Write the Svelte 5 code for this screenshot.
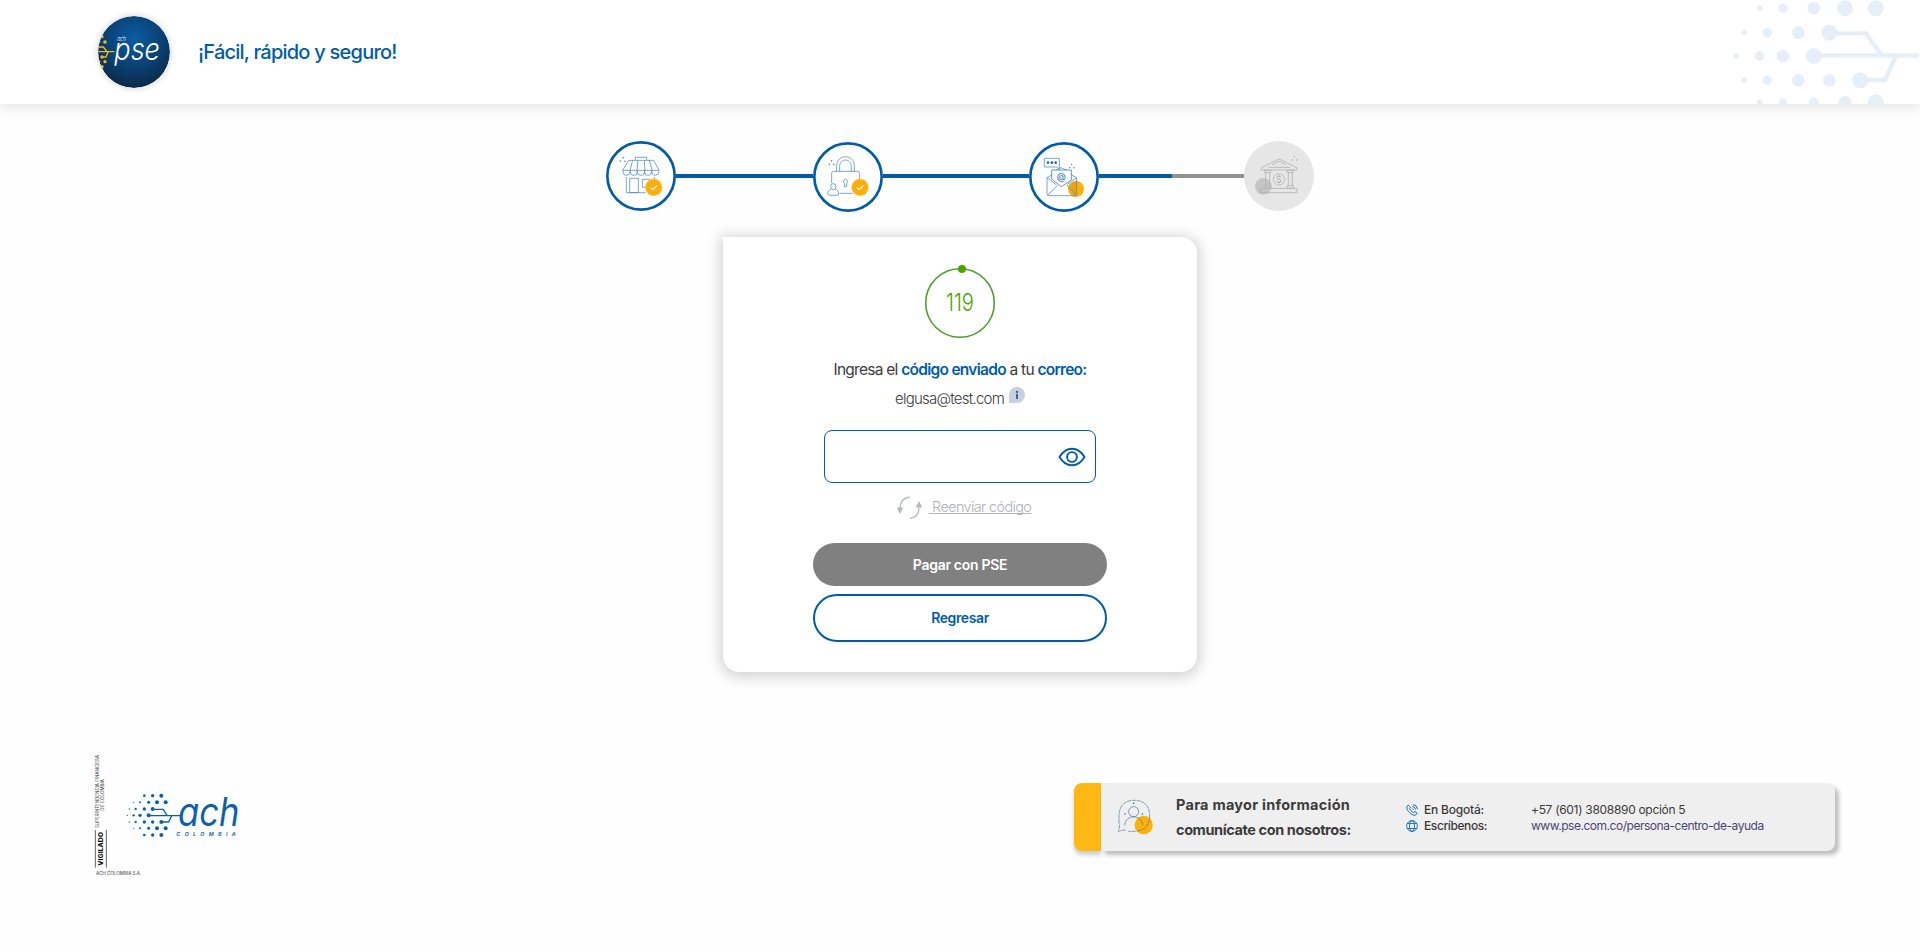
<script>
  const headerDots = [
    [179, 25, 8], [249, 25, 14], [341, 25, 19], [435, 25, 24], [527, 25, 24],
    [133, 98, 8], [202, 98, 14], [295, 98, 19], [388, 98, 24],
    [109, 168, 8], [179, 168, 14], [249, 168, 19], [341, 168, 24],
    [133, 241, 8], [202, 241, 14], [295, 241, 19], [388, 241, 19], [481, 241, 24],
    [179, 307, 8], [249, 307, 12], [341, 307, 15], [435, 307, 20], [527, 307, 24]
  ];
  const achDots = [
    [193, 167, 4], [218, 167, 5], [244, 167, 6],
    [161, 187, 2], [180, 187, 3], [206, 187, 4.5], [231, 187, 6], [257, 187, 6],
    [148, 207, 2], [167, 207, 3.5], [193, 207, 5], [218, 207, 6],
    [142, 226, 2], [161, 226, 3.5], [180, 226, 5], [206, 226, 6],
    [148, 246, 2], [167, 246, 3.5], [193, 246, 5], [218, 246, 5], [244, 246, 6],
    [161, 265, 2], [180, 265, 3], [206, 265, 4.5], [231, 265, 6], [257, 265, 6],
    [193, 285, 4], [218, 285, 5], [244, 285, 6]
  ];
  const scallops = [99, 120.5, 142, 163.5, 185];
  let code = $state('');
</script>

<header>
  <svg class="pse" viewBox="54 48 216 216" role="img" aria-label="ach pse">
    <defs>
      <radialGradient id="ball" cx=".5" cy=".32" r=".68">
        <stop offset="0" stop-color="#0b5ca4" />
        <stop offset=".55" stop-color="#0a4275" />
        <stop offset="1" stop-color="#0a2947" />
      </radialGradient>
      <clipPath id="ballclip"><circle cx="162" cy="156" r="108" /></clipPath>
    </defs>
    <circle cx="162" cy="156" r="108" fill="url(#ball)" />
    <g clip-path="url(#ballclip)" fill="#fdb515">
      <circle cx="66" cy="110" r="5" /><circle cx="75" cy="126" r="5.5" />
      <circle cx="58" cy="126" r="3.5" /><circle cx="58" cy="184" r="3.5" />
      <circle cx="75" cy="185" r="5" /><circle cx="66" cy="200" r="5" />
      <circle cx="66" cy="171" r="5" />
      <path d="M50 141h20l11 14h22M50 155h32M66 171h12l6-15" fill="none" stroke="#fdb515" stroke-width="4" />
    </g>
    <text x="112" y="124" class="tiny" textLength="26" lengthAdjust="spacingAndGlyphs">ach</text>
    <text x="103" y="180" class="big" textLength="137" lengthAdjust="spacingAndGlyphs">pse</text>
  </svg>
  <h1>¡Fácil, rápido y seguro!</h1>
  <svg class="deco" viewBox="0 0 660 312" fill="#e6eff7" aria-hidden="true">
    {#each headerDots as [x, y, r]}<circle cx={x} cy={y} r={r} />{/each}
    <path d="M388 100h110l46 66M341 167h316M481 240h74l33-72" fill="none" stroke="#e6eff7" stroke-width="13" />
  </svg>
</header>

<main>
  <div class="steps">
    <svg class="step" viewBox="48 48 210 210">
      <circle cx="153" cy="153" r="101" class="ring" />
      <g class="line">
        <path d="M116 106H191L207 136H98ZM136 106v-9h34v9M128 106l-8 30M144 106l-3 30M163 106l2 30M178 106l9 30M109 156v47h58M193 156v10M119 160h26v43h-26zM180 163h-23v24h10" />
        {#each scallops as x}<path d={`M${x} 136v4a10.5 11 0 0 0 21.5 0v-4`} />{/each}
      </g>
      <g fill="#2c70b3"><circle cx="99" cy="98" r="2.2" /><circle cx="91" cy="108" r="2.2" /><circle cx="105" cy="109" r="2.2" /></g>
      <circle cx="191" cy="187" r="25" class="check" />
      <path d="M181 187l7 7 14-13" class="tick" />
    </svg>
    <i class="bar" style="width:137px"></i>
    <svg class="step low" viewBox="669 51 210 210">
      <circle cx="774" cy="156" r="101" class="ring" />
      <g class="line">
        <path d="M740 139v-16c0-37 53-37 53 0v16M749 139v-15c0-25 35-25 35 0v15M725 174v-29q0-6 6-6h72q6 0 6 6v24M749 205h39" />
        <path d="M763 175a6.500 6.500 0 1 1 7 0v10h-7z" />
        <ellipse cx="730" cy="185" rx="8" ry="9" />
        <path d="M723 192c-6 2-10 8-10 15q1 4 7 4h21q5 0 5-4c0-8-4-13-10-15" />
      </g>
      <g fill="#2c70b3"><circle cx="725" cy="107" r="2.200" /><circle cx="718" cy="118" r="2.200" /><circle cx="731" cy="118" r="2.200" /></g>
      <circle cx="810" cy="187" r="25" class="check" />
      <path d="M800 187l7 7 14-13" class="tick" />
    </svg>
    <i class="bar" style="width:146px"></i>
    <svg class="step low" viewBox="57 51 210 210">
      <circle cx="162" cy="156" r="101" class="ring" />
      <circle cx="198" cy="192" r="24" fill="#ffb10a" />
      <path d="M176 183l24-20v47h-4q-9-16-20-27z" fill="#c08f2b" opacity=".4" />
      <g class="line">
        <path d="M103 100h45v25l1 7-9-6h-37zM137 135l16-7 16 7M125 150l-14 8v50q0 4 5 4h78q6 0 6-5v-49l-15-8M111 158l29 22M200 158l-28 20M113 210l29-28M197 210l-27-30" />
        <path d="M125 155v-20h59v30l-30 20-29-23z" stroke="#2a6db2" />
      </g>
      <text x="154" y="165" text-anchor="middle" class="at">@</text>
      <g fill="#2468ae"><circle cx="114" cy="113" r="4" /><circle cx="125.500" cy="113" r="4" /><circle cx="137" cy="113" r="4" /></g>
      <g fill="#2c70b3"><circle cx="185" cy="118" r="2" /><circle cx="179" cy="128" r="2" /><circle cx="192" cy="128" r="2" /></g>
    </svg>
    <i class="bar" style="width:73px"></i><i class="bar off" style="width:72px"></i>
    <svg class="step" viewBox="702 48 210 210">
      <circle cx="807" cy="153" r="105" fill="#e6e6e6" />
      <circle cx="760" cy="184" r="25" fill="#c5c5c5" />
      <g class="line grey">
        <path d="M754 135v-7l53-26 53 26v7zM786 119l21-10 21 10M775 127h65M764 136h18v7h-18zM832 136h18v7h-18zM767 143v39M779 143v39M835 143v39M847 143v39M764 182h18v8h-18zM832 182h18v8h-18zM751 190h110v13H751z" />
        <circle cx="807" cy="163" r="17" />
      </g>
      <path d="M813 157q-2-4-7-3.500c-7 .5-7 8 0 9 9 1 9 9 1 9q-6 0-7-4M807 151v3M807 172v3" fill="none" stroke="#9b9b9b" stroke-width="2.500" />
      <g fill="#aaa"><circle cx="853" cy="95" r="2" /><circle cx="847" cy="105" r="2" /><circle cx="860" cy="105" r="2" /></g>
    </svg>
  </div>

  <section class="card">
    <svg class="timer" width="72" height="76" viewBox="0 0 72 76">
      <circle cx="36" cy="40" r="34.300" fill="none" stroke="#4ba02c" stroke-width="1.600" />
      <circle cx="38" cy="6" r="4" fill="#4ca500" />
      <text x="22" y="48" textLength="28" lengthAdjust="spacingAndGlyphs">119</text>
    </svg>
    <p class="prompt">Ingresa el <b>código enviado</b> a tu <b>correo:</b></p>
    <p class="mail"><span>elgusa@test.com</span>
      <svg width="16" height="16" viewBox="0 0 16 16"><path d="M0 16V8a8 8 0 1 1 8 8z" fill="#c7cfe0" /><path d="M7 7h2v5H7z" fill="#4a6198" /><circle cx="8" cy="5" r="1.200" fill="#4a6198" /></svg>
    </p>
    <label class="field">
      <input type="password" bind:value={code} aria-label="Código" />
      <svg width="28" height="20" viewBox="0 0 28 20" fill="none" stroke="#005ca9" stroke-width="1.900"><path d="M1.500 10C5 4 9 1.700 14 1.700S23 4 26.500 10C23 16 19 18.300 14 18.300S5 16 1.500 10z" /><circle cx="14" cy="10" r="4.900" /></svg>
    </label>
    <div class="resend">
      <svg width="27" height="24" viewBox="0 0 27 24" fill="none" stroke="#b7babd" stroke-width="1.400"><path d="M13.500 1C7 2 4 6 4 12M14 22.500c6-1 9-5 9-11" /><path d="M.7 11.500h6.600L4 18zM19.700 11.500h6.600L23 5z" fill="#b7babd" stroke="none" /></svg>
      <a href="#resend">&nbsp;Reenviar código</a>
    </div>
    <button class="pay">Pagar con PSE</button>
    <button class="back">Regresar</button>
  </section>
</main>

<footer>
  <svg class="ach" width="180" height="150" viewBox="0 0 540 450">
    <g fill="#333" class="seal">
      <text transform="translate(56 264) rotate(-90)" textLength="219" lengthAdjust="spacingAndGlyphs">SUPERINTENDENCIA FINANCIERA</text>
      <text transform="translate(73 212) rotate(-90)" textLength="95" lengthAdjust="spacingAndGlyphs">DE COLOMBIA</text>
      <text transform="translate(69 377) rotate(-90)" textLength="101" lengthAdjust="spacingAndGlyphs" class="vig">VIGILADO</text>
      <text x="48" y="404" textLength="136" lengthAdjust="spacingAndGlyphs" class="sa">ACH COLOMBIA S.A.</text>
      <path d="M46 270v113M79 270v113" stroke="#444" stroke-width="2.500" />
    </g>
    <g fill="#0c60ab">
      {#each achDots as [x, y, r]}<circle cx={x} cy={y} r={r} />{/each}
      <path d="M218 208h32l11 18M206 227h96M244 246h22l9-19" fill="none" stroke="#0c60ab" stroke-width="4" />
      <text x="294" y="258" class="achword" textLength="184" lengthAdjust="spacingAndGlyphs">ach</text>
      <text x="289" y="287" class="country" textLength="178">COLOMBIA</text>
    </g>
  </svg>
  <div class="info">
    <div class="accent"></div>
    <div class="panel">
      <svg class="agent" width="37" height="36" viewBox="172 86 111 108" fill="none">
        <circle cx="252" cy="164" r="27.500" fill="#ffb10a" />
        <g stroke="#456e99" stroke-width="2"><path d="M178 160v-24q2-46 46-46q45 1 46 46q-1 45-46 47h-18M198 179q-10 0-22 4q4-9 3-23" stroke-dasharray="13 2" /><path d="M195 165c2-34 52-34 54 0" /><circle cx="222" cy="124" r="15" /></g>
        <g fill="#2c70b3"><circle cx="222" cy="99" r="2.500" /><circle cx="196" cy="131" r="2.500" /><circle cx="248" cy="131" r="2.500" /></g>
      </svg>
      <div class="more"><span>Para mayor información</span><span class="second">comunícate con nosotros:</span></div>
      <dl>
        <dt><svg width="12" height="12" viewBox="0 0 12 12" fill="none" stroke="#126bb4" stroke-width="1"><path d="M2.200 1c-3 2.500-.5 6 2 8.200 2.300 2 5.500 3.200 7 .1L9 7.500 7.500 8.600C5.700 7.700 4.300 6.200 3.600 4.500L4.600 3.200zM6.500 2.500a3.500 3.500 0 0 1 3 3M7 .6a5 5 0 0 1 4.500 4.500M6.500 4.500l1 1" /></svg><span class="k1">En Bogotá:</span></dt>
        <dd class="v1">+57 (601) 3808890 opción 5</dd>
        <dt><svg width="12" height="12" viewBox="0 0 12 12" fill="none" stroke="#126bb4" stroke-width=".9"><circle cx="6" cy="6" r="5.400" /><ellipse cx="6" cy="6" rx="2.500" ry="5.400" /><path d="M1 3.500h10M1 8.500h10" /></svg><span class="k2">Escríbenos:</span></dt>
        <dd class="v2">www.pse.com.co/persona-centro-de-ayuda</dd>
      </dl>
    </div>
  </div>
</footer>

<style>
  :global(body) { background: #fefefe; }
  header, main, footer { font-family: Inter, "Open Sans", sans-serif; color: #3c3c3b; }
  header { height: 104px; box-sizing: border-box; padding-left: 98px; display: flex; align-items: center; background: #fff; box-shadow: 0 2px 16px rgba(0, 0, 0, .12); }
  .pse { width: 72px; height: 72px; border-radius: 50%; box-shadow: 0 0 7px rgba(0, 0, 0, .2); }
  .pse text { font-style: italic; fill: #fff; }
  .tiny { font-size: 19px; font-weight: 300; }
  .big { font-size: 91px; font-weight: 300; }
  h1 { margin: 0 0 0 28px; font-size: 20px; line-height: 24px; font-weight: 500; color: #005ca9; letter-spacing: -.77px; white-space: nowrap; }
  .deco { width: 220px; height: 104px; margin-left: auto; }
  .steps { height: 72px; padding-top: 36px; display: flex; justify-content: center; align-items: center; }
  .step { width: 70px; height: 70px; flex: none; }
  .low { margin-top: 2px; }
  .ring { fill: #fff; stroke: #005ca9; stroke-width: 8; }
  .line { fill: none; stroke: #4984c0; stroke-width: 2.200; }
  .grey { stroke: #b2b2b2; stroke-width: 2.500; }
  .check { fill: #ffad08; stroke: #ffc64d; stroke-width: 2; }
  .tick { fill: none; stroke: #fff; stroke-width: 3.500; }
  .at { font-size: 28px; font-weight: 500; fill: #3275b9; }
  .bar { height: 4px; background: #005ca9; }
  .off { background: #929292; }
  .card { width: 474px; height: 435px; box-sizing: border-box; margin: 25px auto 0; padding-top: 26px; border-radius: 0 16px 16px; background: #fff; box-shadow: 0 2px 14px 3px rgba(0, 0, 0, .18); display: flex; flex-direction: column; align-items: center; }
  .timer { flex: none; }
  .timer text { font-size: 24px; font-weight: 300; fill: #4ba500; }
  p { margin: 0; white-space: nowrap; }
  .prompt { margin-top: 21px; font-size: 15.500px; line-height: 20px; letter-spacing: -.73px; }
  .prompt b { color: #005ca9; font-weight: 600; }
  .mail { display: flex; height: 20px; margin-top: 7px; gap: 5px; }
  .mail span { font-size: 15px; line-height: 23px; font-weight: 300; letter-spacing: -.77px; }
  .field { box-sizing: border-box; width: 272px; height: 53px; margin-top: 23px; border: 1px solid #005ca9; border-radius: 8px; display: flex; align-items: center; padding-right: 9px; }
  input { flex: 1; min-width: 0; border: 0; outline: 0; background: none; margin-left: 12px; font: 18px Inter, sans-serif; }
  .resend { display: flex; align-items: center; gap: 6px; height: 24px; margin-top: 13px; padding-left: 7px; }
  .resend a { margin-top: -2px; font-size: 14.500px; line-height: 22px; font-weight: 300; color: #aeb1b4; letter-spacing: -.65px; text-decoration: underline; text-underline-offset: 1px; text-decoration-skip-ink: none; white-space: nowrap; }
  button { width: 294px; box-sizing: border-box; font: 600 14px Inter, sans-serif; padding: 0; }
  .pay { height: 43px; margin-top: 23px; padding-bottom: 1px; border: 0; border-radius: 22px; background: #808080; color: #fff; letter-spacing: -.3px; }
  .back { height: 48px; margin-top: 8px; padding-bottom: 2px; border: 2px solid #005ca9; border-radius: 24px; background: #fff; color: #005ca9; letter-spacing: -.4px; }
  footer { display: flex; justify-content: space-between; padding: 68px 85px 0 80px; }
  .seal { font-size: 14px; }
  .vig { font-size: 18px; font-weight: 800; fill: #111; }
  .sa { font-size: 13px; }
  .achword { font-size: 118px; font-weight: 400; font-style: italic; }
  .country { font-size: 16px; font-weight: 600; font-style: italic; }
  .info { margin-top: 43px; width: 761px; height: 68px; display: flex; }
  .accent { width: 27px; border-radius: 8px 0 0 8px; background: #fdb813; box-shadow: 0 4px 4px rgba(0, 0, 0, .2); }
  .panel { flex: 1; display: flex; background: #efefef; border-radius: 0 8px 8px 0; box-shadow: 4px 4px 4px rgba(0, 0, 0, .25); }
  .agent { margin: 16px 0 0 16px; flex: none; }
  .more { width: 249px; margin-left: 22px; padding-top: 9px; display: flex; flex-direction: column; font-size: 14.500px; font-weight: 700; line-height: 25px; white-space: nowrap; letter-spacing: .25px; }
  .second { letter-spacing: -.4px; }
  dl { margin: 19px 0 0 -19px; display: grid; grid-template-columns: 125px auto; grid-auto-rows: 16px; align-content: start; font-size: 12px; line-height: 16px; white-space: nowrap; }
  dt { display: flex; align-items: center; gap: 6px; font-weight: 500; }
  dd { margin: 0; letter-spacing: -.31px; }
  .k1 { letter-spacing: -.2px; }
  .k2 { letter-spacing: -.4px; }
  .v2 { color: #4b4576; letter-spacing: -.47px; }
</style>
